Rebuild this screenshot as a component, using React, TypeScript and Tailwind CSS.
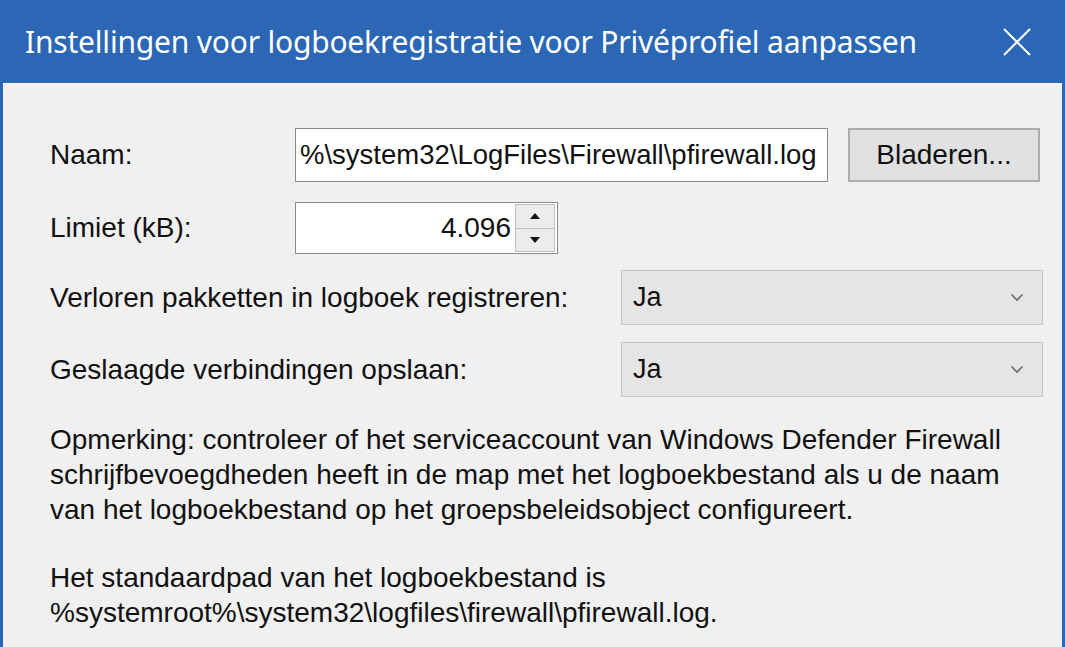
import React from 'react';

const body = { fontFamily: '"Liberation Sans", Arial, sans-serif' };
const title = { fontFamily: '"Noto Sans", "Open Sans", sans-serif' };

function Chevron() {
  return (
    <svg width="14" height="9" viewBox="0 0 14 9" fill="none">
      <path d="M1.5 1.5 L7 7 L12.5 1.5" stroke="#6b6b6b" strokeWidth="1.6" />
    </svg>
  );
}

function Combo({ value }: { value: string }) {
  return (
    <div className="w-[422px] h-[55px] flex items-center justify-between pl-[11px] pr-[18px] bg-[#e5e5e5] border border-[#c5c5c5] text-[27px] text-[#111]">
      <span>{value}</span>
      <Chevron />
    </div>
  );
}

export default function App() {
  return (
    <div className="w-[1065px] h-[647px] bg-[#2b67b5] flex flex-col overflow-hidden" style={body}>
      <div className="h-[83px] shrink-0 flex items-center justify-between pl-[25px] pr-[34px] text-white">
        <span className="text-[30px] tracking-[-0.2px]" style={title}>
          Instellingen voor logboekregistratie voor Privéprofiel aanpassen
        </span>
        <svg width="28" height="28" viewBox="0 0 28 28" fill="none">
          <path d="M1 1 L27 27 M27 1 L1 27" stroke="white" strokeWidth="2" />
        </svg>
      </div>

      <div className="flex-1 mx-[3px] bg-[#f0f0f0] border-t border-[#f8f8f8] pl-[47px] pt-[44px] text-[#111] text-[28px]">
        <div className="flex items-center h-[54px]">
          <span className="w-[245px]">Naam:</span>
          <div className="w-[533px] h-[54px] bg-white border border-[#8a8a8a] flex items-center pl-[4px] overflow-hidden whitespace-nowrap text-[27.5px]">
            %\system32\LogFiles\Firewall\pfirewall.log
          </div>
          <button className="ml-[20px] w-[192px] h-[54px] bg-[#e1e1e1] border-2 border-[#adadad] text-[28px] text-[#111]">
            Bladeren...
          </button>
        </div>

        <div className="flex items-center mt-[20px] h-[52px]">
          <span className="w-[245px]">Limiet (kB):</span>
          <div className="w-[263px] h-[52px] bg-white border border-[#8a8a8a] flex items-center">
            <span className="flex-1 text-right pr-[4px]">4.096</span>
            <div className="w-[40px] h-[48px] mr-[2px] flex flex-col border border-[#c0c0c0]">
              <div className="flex-1 bg-[#ececec] border-b border-[#c0c0c0] flex items-center justify-center">
                <svg width="10" height="6" viewBox="0 0 10 6"><path d="M0 6 L5 0 L10 6 Z" fill="#111" /></svg>
              </div>
              <div className="flex-1 bg-[#ececec] flex items-center justify-center">
                <svg width="10" height="6" viewBox="0 0 10 6"><path d="M0 0 L5 6 L10 0 Z" fill="#111" /></svg>
              </div>
            </div>
          </div>
        </div>

        <div className="flex items-center mt-[16px]">
          <span className="w-[571px]">Verloren pakketten in logboek registreren:</span>
          <Combo value="Ja" />
        </div>

        <div className="flex items-center mt-[17px]">
          <span className="w-[571px]">Geslaagde verbindingen opslaan:</span>
          <Combo value="Ja" />
        </div>

        <p className="mt-[25px] leading-[35px] whitespace-nowrap">
          Opmerking: controleer of het serviceaccount van Windows Defender Firewall
          <br />
          schrijfbevoegdheden heeft in de map met het logboekbestand als u de naam
          <br />
          van het logboekbestand op het groepsbeleidsobject configureert.
        </p>
        <p className="mt-[33px] leading-[35px] whitespace-nowrap">
          Het standaardpad van het logboekbestand is
          <br />
          %systemroot%\system32\logfiles\firewall\pfirewall.log.
        </p>
      </div>
    </div>
  );
}
